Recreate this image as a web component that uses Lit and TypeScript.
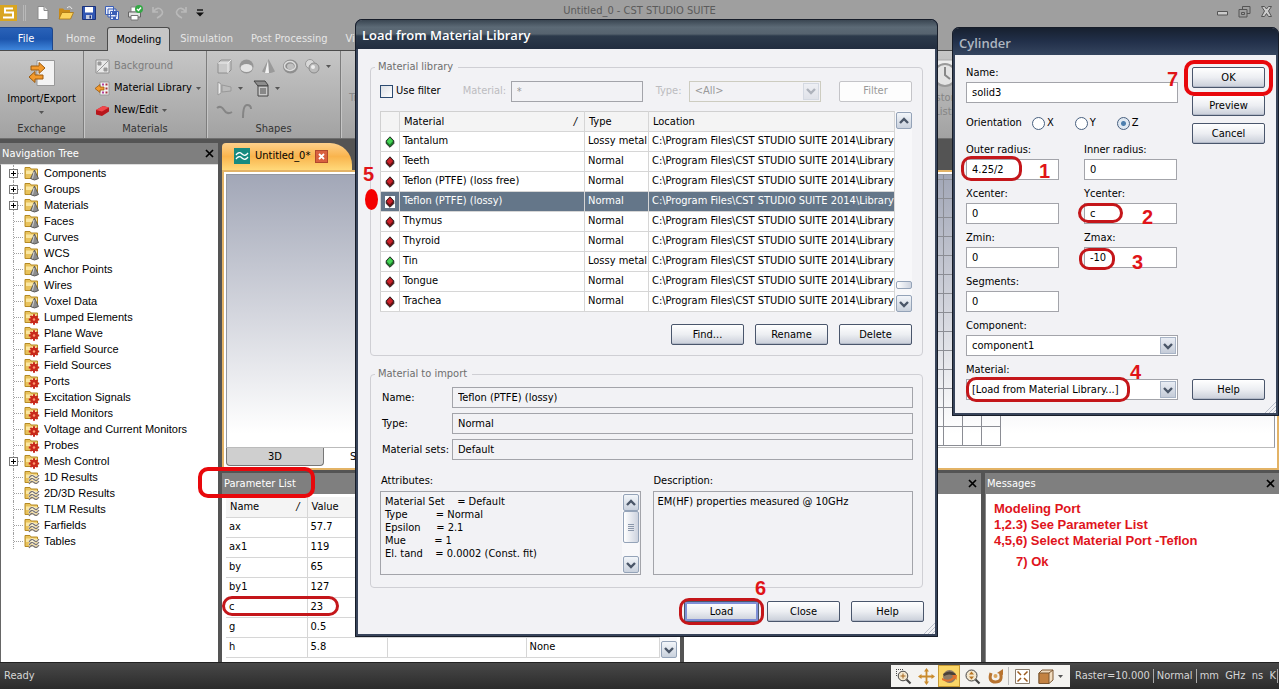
import { LitElement, html, svg, css, nothing } from "lit";
import { customElement, state } from "lit/decorators.js";
import { classMap } from "lit/directives/class-map.js";

type Node = { name: string; kind: "cone" | "gear" | "wave"; plus?: boolean };
type Mark = { x: number; y: number; w: number; h: number; kind?: string };

const TREE: Node[] = [
  { name: "Components", kind: "cone", plus: true },
  { name: "Groups", kind: "cone", plus: true },
  { name: "Materials", kind: "cone", plus: true },
  { name: "Faces", kind: "cone" },
  { name: "Curves", kind: "cone" },
  { name: "WCS", kind: "cone" },
  { name: "Anchor Points", kind: "cone" },
  { name: "Wires", kind: "cone" },
  { name: "Voxel Data", kind: "cone" },
  { name: "Lumped Elements", kind: "gear" },
  { name: "Plane Wave", kind: "gear" },
  { name: "Farfield Source", kind: "gear" },
  { name: "Field Sources", kind: "gear" },
  { name: "Ports", kind: "gear" },
  { name: "Excitation Signals", kind: "gear" },
  { name: "Field Monitors", kind: "gear" },
  { name: "Voltage and Current Monitors", kind: "gear" },
  { name: "Probes", kind: "gear" },
  { name: "Mesh Control", kind: "gear", plus: true },
  { name: "1D Results", kind: "wave" },
  { name: "2D/3D Results", kind: "wave" },
  { name: "TLM Results", kind: "wave" },
  { name: "Farfields", kind: "wave" },
  { name: "Tables", kind: "wave" },
];

const PARAMS = [
  ["ax", "57.7"],
  ["ax1", "119"],
  ["by", "65"],
  ["by1", "127"],
  ["c", "23"],
  ["g", "0.5"],
  ["h", "5.8"],
];

const MATERIALS = [
  ["Tantalum", "Lossy metal"],
  ["Teeth", "Normal"],
  ["Teflon (PTFE) (loss free)", "Normal"],
  ["Teflon (PTFE) (lossy)", "Normal"],
  ["Thymus", "Normal"],
  ["Thyroid", "Normal"],
  ["Tin", "Lossy metal"],
  ["Tongue", "Normal"],
  ["Trachea", "Normal"],
];

const LOCATION = "C:\\Program Files\\CST STUDIO SUITE 2014\\Library";

const ATTRS = `Material Set    = Default
Type         = Normal
Epsilon     = 2.1
Mue         = 1
El. tand    = 0.0002 (Const. fit)`;

const RINGS: Mark[] = [
  { x: 198, y: 467, w: 117, h: 31, kind: "bright" },
  { x: 222, y: 596, w: 117, h: 20 },
  { x: 961, y: 156, w: 61, h: 25 },
  { x: 1078, y: 203, w: 45, h: 20 },
  { x: 1079, y: 248, w: 36, h: 22 },
  { x: 966, y: 377, w: 164, h: 25 },
  { x: 1184, y: 60, w: 89, h: 36, kind: "bright" },
  { x: 679, y: 598, w: 85, h: 27 },
];

const DIGITS = [
  { t: "1", x: 1039, y: 160 },
  { t: "2", x: 1142, y: 206 },
  { t: "3", x: 1132, y: 251 },
  { t: "4", x: 1130, y: 361 },
  { t: "5", x: 363, y: 163 },
  { t: "6", x: 755, y: 577 },
  { t: "7", x: 1167, y: 68 },
];

const chevron = (dir: "up" | "down") => html`<svg class="chev" viewBox="0 0 10 8" width="10" height="8">
  <path d=${dir === "up" ? "M1 6 5 2 9 6" : "M1 2 5 6 9 2"} fill="none" stroke="#4a5668" stroke-width="2.4" />
</svg>`;

const caret = html`<svg class="caret" viewBox="0 0 5 3" width="5" height="3"><path d="M0 0H5L2.5 3z" fill="#555" /></svg>`;

const closeX = html`<svg viewBox="0 0 9 9" width="9" height="9"><path d="M1 1 8 8M8 1 1 8" stroke="#000" stroke-width="1.7" /></svg>`;

const folderIcon = (kind: string) => html`<svg viewBox="0 0 16 15" width="16" height="15">
  <path d="M1 1.500H6L7 3H13.500V12.500H1z" fill="#e9c35c" stroke="#b58a24" />
  <path d="M2 4.500H13V8H2z" fill="#fae7a2" />
  ${kind === "cone"
    ? svg`<path d="M10.500 4 14.500 12.500Q10.500 15.500 6.500 12.500z" fill="#8c8c8c" stroke="#4c4c4c" stroke-width=".8"/><path d="M10 6 8.500 12.500" stroke="#d5d5d5"/>`
    : kind === "gear"
      ? svg`<circle cx="10" cy="9.500" r="3.700" fill="#c8281c"/><g stroke="#c8281c" stroke-width="2"><path d="M10 4.300V14.700M4.800 9.500H15.200M6.400 5.900 13.600 13.100M13.600 5.900 6.400 13.100"/></g><circle cx="10" cy="9.500" r="1.200" fill="#ff9a70"/>`
      : svg`<g fill="none" stroke="#fff" stroke-width="2"><path d="M5 8Q7.500 4 10 6.500T15 5M5 11Q7.500 7 10 9.500T15 8M5 14Q7.500 10 10 12.500T15 11"/></g><g fill="none" stroke="#76706c" stroke-width="1.100"><path d="M5 8Q7.500 4 10 6.500T15 5M5 11Q7.500 7 10 9.500T15 8M5 14Q7.500 10 10 12.500T15 11"/></g>`}
</svg>`;

const gem = (green: boolean) => html`<svg viewBox="0 0 10 12" width="10" height="12">
  <path d="M5 .8 8.800 4.800V7.500L5 11.300 1.200 7.500V4.800z" fill=${green ? "#1c7a2a" : "#6d0f12"} stroke="#1d1d1d" stroke-width=".9" />
  <path d="M4.800 1.600 8 5 4.800 8.600 1.700 5.500z" fill=${green ? "#45d455" : "#c9222a"} />
</svg>`;

@customElement("app-root")
export class AppRoot extends LitElement {
  @state() private selected = 3;
  @state() private axis = "Z";

  static styles = css`
    :host {
      display: block;
      position: relative;
      height: 100vh;
      overflow: hidden;
      font: 11px/14px "DejaVu Sans Condensed", "DejaVu Sans", sans-serif;
      color: #000;
    }
    * { box-sizing: border-box; }
    button, input, select, textarea { font: inherit; color: inherit; margin: 0; border-radius: 0; }
    svg { display: block; flex: none; }
    .app { display: flex; flex-direction: column; height: 100%; background: #545454; }

    /* title bar and ribbon */
    .top { background: #9f9f9f; }
    .titlebar { display: grid; grid-template-columns: 1fr auto 1fr; align-items: center; height: 26px; }
    .quick { display: flex; align-items: center; gap: 7px; }
    .quick .sep { width: 3px; height: 16px; border: solid #b9b9b9; border-width: 0 1px; margin: 0 2px 0 -2px; }
    .apptitle { color: #5b5b5b; font-size: 11px; padding-bottom: 4px; }
    .winbtns { display: flex; justify-content: flex-end; gap: 9px; padding: 0 6px 4px 0; }
    .tabs { display: flex; align-items: flex-end; height: 25px; border-bottom: 1px solid #4b4b4b; color: #e6e6e6; }
    .tab { background: none; border: 0; padding: 0; height: 23px; margin-right: 18px; white-space: nowrap; }
    .tab.file { width: 53px; margin-right: 13px; background: linear-gradient(#2a62b8, #1c55ad 50%, #3f86dc); border: 1px solid #1d468c; border-width: 1px 1px 0 0; border-radius: 0 3px 0 0; color: #fff; }
    .tab.on { width: 63px; height: 24px; margin: 0 10px -1px -6px; color: #000; background: #c6c6c6; border: 1px solid #4b4b4b; border-bottom: 0; border-radius: 3px 3px 0 0; }
    .ribbon { display: flex; height: 88px; background: linear-gradient(#c6c6c6, #b6b6b6 45%, #a2a2a2); border-bottom: 1px solid #6f6f6f; }
    .group { display: flex; flex-direction: column; flex: none; border-right: 1px solid #7d7d7d; box-shadow: 1px 0 #c6c6c6; }
    .group .body { flex: 1; }
    .group h2 { margin: 0; font: inherit; text-align: center; height: 16px; color: #333; }
    .g1 { width: 84px; } .g2 { width: 123px; } .g3 { width: 134px; }
    .g4 { width: 572px; } .g5 { flex: 1; }
    .big { display: flex; flex-direction: column; align-items: center; gap: 5px; width: 100%; border: 0; background: none; padding: 8px 0 0; white-space: nowrap; }
    .list { display: flex; flex-direction: column; padding: 4px 0 0 11px; }
    .cmd { display: flex; align-items: center; gap: 4px; height: 22px; padding: 0; border: 0; background: none; white-space: nowrap; }
    .cmd.off, .off { color: #7c7c7c; }
    .shapes { display: grid; grid-template-rows: repeat(3, 22px); align-content: start; padding: 4px 0 0 9px; }
    .shapes div { display: flex; gap: 5px; align-items: center; }
    .g4 .body { padding: 40px 0 0 8px; color: #8b8b8b; }
    .g5 .body { padding: 6px 0 0 8px; color: #858585; line-height: 14px; text-align: center; width: 52px; }

    /* work area */
    .work { flex: 1; display: flex; gap: 4px; padding-top: 4px; min-height: 0; }
    .panel { display: flex; flex-direction: column; background: #fff; min-width: 0; min-height: 0; }
    .phead { display: flex; align-items: center; justify-content: space-between; height: 21px; flex: none; background: #7f7f7f; color: #fff; padding: 0 4px 0 2px; }
    .phead button, .tabclose { border: 0; background: none; padding: 0; }
    .nav { width: 218px; flex: none; }
    .tree { list-style: none; margin: 0; padding: 0 0 0 12px; flex: 1; border-top: 1px solid #ddd; border-left: 1px solid #666; }
    .tree li { position: relative; display: flex; align-items: center; gap: 4px; height: 16px; padding-left: 10px; font-family: "Liberation Sans", sans-serif; white-space: nowrap; border-left: 1px dotted #a0a0a0; }
    .tree li::before { content: ""; position: absolute; left: 0; top: 8px; width: 9px; border-top: 1px dotted #a0a0a0; }
    .plus { position: absolute; left: -5px; top: 4px; width: 9px; height: 9px; padding: 0; border: 1px solid #777; background: #fff; }
    .plus svg { width: 7px; height: 7px; }
    .right { flex: 1; display: flex; flex-direction: column; min-width: 0; }
    .doc { flex: 1; display: flex; flex-direction: column; min-height: 0; }
    .doctab { display: flex; align-items: center; gap: 5px; align-self: flex-start; width: 130px; height: 27px; padding: 0 0 1px 12px; background: linear-gradient(#fdd08b, #f9b44d 50%, #ffd97a); border-radius: 4px 22px 0 0; }
    .tabclose { width: 13px; height: 13px; background: #d9603f; border: 1px solid #b0482d; }
    .frame { flex: 1; display: flex; flex-direction: column; border: 2px solid #e3b366; background: #fff; padding: 2px; min-height: 0; }
    .canvas { flex: 1; background: linear-gradient(#a2a7b7, #d3d5dd 50%, #fff 95%); border: 1px solid #9498a2; border-bottom-color: #bbb; min-height: 0; }
    .grid { width: 213px; height: 271px; margin-left: 561px; background: repeating-linear-gradient(0deg, #8b8d94 0 1px, #0000 1px 19px), repeating-linear-gradient(-90deg, #8b8d94 0 1px, #0000 1px 19px); }
    .views { display: flex; height: 18px; }
    .views button { padding: 0 26px; border: 0; background: none; }
    .views .on { width: 98px; background: #cfcfcf; border: 1px solid #777; border-top: 0; border-radius: 0 0 4px 4px; }
    .bottom { display: flex; gap: 4px; height: 192px; padding-top: 3px; flex: none; }
    .params { width: 458px; flex: none; }
    .progress { flex: 1; }
    .messages { width: 294px; flex: none; }
    .ptable { display: flex; flex: 1; padding: 3px 3px 4px 4px; }
    table { border-collapse: collapse; table-layout: fixed; width: 100%; }
    th, td { font-weight: normal; text-align: left; height: 20px; padding: 0 0 1px 3px; border: 1px solid #d6d6d6; border-width: 0 1px 1px 0; white-space: nowrap; overflow: hidden; }
    th { background: #f4f4f4; padding: 1px 0 0 4px; }
    .sort { float: right; padding-right: 7px; font-style: italic; }
    .note { padding: 7px 8px; color: #e0141c; font: bold 13px/16px "Liberation Sans", sans-serif; border-left: 1px solid #888; flex: 1; white-space: nowrap; }
    .note p { margin: 0; }
    .note .last { padding: 5px 0 0 22px; }

    /* status bar */
    .status { display: flex; align-items: center; height: 27px; flex: none; background: linear-gradient(#484848, #2b2b2b); border-top: 1px solid #222; color: #d6d6d6; padding: 0 1px 0 4px; }
    .status .tools { display: flex; align-items: center; gap: 3px; margin-left: auto; height: 22px; width: 179px; background: #f4f3f0; padding: 0 2px; margin-right: 5px; }
    .tool { border: 0; padding: 0; background: none; width: 20px; height: 20px; display: grid; place-items: center; }
    .tool.on { background: #fbd666; outline: 1px solid #c79a35; }
    .tools .bar { width: 1px; height: 18px; background: #bbb; }
    .status .cell { border-left: 1px solid #aaa; padding-left: 3px; margin-left: 3px; white-space: pre; }
    .status .end { border-right: 1px solid #aaa; padding-right: 1px; }

    /* dialogs */
    .dialog { position: absolute; display: flex; flex-direction: column; background: #f2f2f5; border: 3px solid #38445a; outline: 1px solid #171d29; outline-offset: -1px; border-top-width: 1px; border-radius: 7px 7px 0 0; }
    .dialog > header { color: #fff; font: 600 13px/30px "Open Sans", sans-serif; height: 29px; flex: none; margin: 0 -2px; padding-left: 6px; background: linear-gradient(#3a4652, #5c6a76 25%, #56636f 48%, #2c3a4b 55%, #222d3f); border-radius: 6px 6px 0 0; }
    .lib { left: 355px; top: 19px; width: 583px; }
    .cyl { left: 952px; top: 27px; width: 327px; }
    .cyl > header { color: #aeb6c0; height: 27px; background: linear-gradient(#17202f, #22304a 50%, #35455e); }
    .dbody { padding: 11px 12px 12px 12px; }
    fieldset { min-width: 0; margin: 0; padding: 6px 10px 10px 9px; border: 1px solid #cfcfd4; border-radius: 4px; }
    legend { padding: 0 5px 0 3px; margin-left: -5px; color: #6e6e6e; }
    .filter { display: flex; align-items: center; height: 22px; margin-bottom: 9px; }
    .filter label { flex: none; }
    .check { appearance: none; width: 13px; height: 13px; border: 1px solid #2c4a70; background: linear-gradient(135deg, #dcdfe4, #fff); margin-right: 3px; flex: none; }
    .lab { color: #bcbcc0; }
    .lab.m { margin-left: 22px; width: 48px; } .lab.t { margin-left: 13px; width: 33px; }
    .txt { border: 1px solid #a3a4aa; background: #fff; height: 21px; padding: 0 5px; min-width: 0; width: 100%; }
    .txt:disabled, .txt[readonly] { background: #f2f2f5; }
    .filter .txt { width: 132px; color: #999; }
    .combo { display: flex; border: 1px solid #a3a4aa; background: #fff; height: 21px; padding: 1px; }
    .combo select { appearance: none; flex: 1; min-width: 0; border: 0; background: none; padding: 0 4px; opacity: 1; }
    .arrow { width: 16px; display: grid; place-items: center; border: 1px solid #a8b4c6; background: linear-gradient(#e9edf4, #c5ccd8); }
    .filter .combo { width: 132px; border-color: #cdccc0; background: #f2f2f5; color: #999; }
    .filter .arrow { opacity: .4; }
    .btn { width: 73px; height: 21px; flex: none; padding: 0; border: 1px solid #4a566c; border-radius: 2px; background: linear-gradient(#fff, #eceef2 50%, #c9ced9); box-shadow: inset 0 -1px #b3bac8; }
    .btn:disabled { color: #999; background: #fdfdfd; border-color: #c4c4c8; box-shadow: none; margin-left: auto; }
    .btn.def { box-shadow: inset 0 0 0 2px #7e8fd6; width: 75px; margin-right: -3px; }
    .row { display: flex; gap: 11px; justify-content: flex-end; }
    .foot { margin-right: -1px; }
    .tbl { display: flex; margin-bottom: 12px; background: #fff; }
    .tbl table { flex: 1; border: 1px solid #d0d0d0; border-bottom: 0; }
    .tbl td { padding-bottom: 2px; }
    .tbl td:first-child { padding: 0 0 0 4px; }
    .sel td { background: #647689; color: #fff; }
    .sel td:first-child svg { background: #fff; }
    .scroll { width: 17px; flex: none; display: flex; flex-direction: column; padding: 1px 0 0 1px; background: #f8f8fa; }
    .sb { width: 16px; height: 17px; padding: 0; border: 1px solid #94a3b8; border-radius: 2px; display: grid; place-items: center; background: linear-gradient(#f3f6fa, #c9d1dd); flex: none; }
    .thumb { flex: none; border: 1px solid #94a3b8; border-radius: 2px; background: linear-gradient(90deg, #fff, #cdd3df); display: grid; place-content: center; gap: 1px; }
    .thumb i { width: 6px; height: 1px; background: #8a97ab; }
    .imp { margin-top: 11px; margin-bottom: 13px; padding-bottom: 12px; }
    .pairs { display: grid; grid-template-columns: 71px 1fr; row-gap: 5px; align-items: center; padding: 0 0 14px 2px; margin-right: -1px; }
    .pairs .txt { margin-left: -1px; width: calc(100% + 1px); }
    .cols { display: grid; grid-template-columns: 1fr 1fr; column-gap: 12px; margin-right: -1px; }
    .cols > div > label { display: block; height: 17px; padding-left: 1px; }
    .area { display: flex; height: 84px; border: 1px solid #a3a4aa; padding: 1px 1px 1px 0; }
    .area textarea { flex: 1; min-width: 0; resize: none; border: 0; outline: 0; background: none; padding: 2px 4px; line-height: 13px; white-space: pre; overflow: hidden; }
    .grip { position: absolute; right: 0; bottom: 0; }

    .cbody { display: grid; grid-template-columns: 212px 73px; column-gap: 14px; padding: 11px 0 13px 11px; }
    .fields { display: grid; grid-template-columns: 93px 93px; column-gap: 25px; row-gap: 7px; }
    .wide { grid-column: 1 / -1; width: 212px; }
    .fld label { display: block; height: 16px; }
    .orient { display: flex; align-items: center; height: 26px; }
    .orient label { display: flex; align-items: center; gap: 2px; }
    .orient .o1 { margin-left: 10px; } .orient .o2, .orient .o3 { margin-left: 21px; }
    .radio { appearance: none; width: 13px; height: 13px; border: 1px solid #48607f; border-radius: 50%; background: #fff; }
    .radio:checked { background: radial-gradient(#4d7fae 0 2px, #dfe8f2 3px); }
    .acts { display: flex; flex-direction: column; gap: 7px; padding-top: 1px; }
    .acts .last { margin-top: auto; }

    /* call-outs laid over the windows */
    .ring { position: absolute; border: 3px solid #c4161a; border-radius: 10px; pointer-events: none; }
    .ring.bright { border: 4px solid #e8080c; }
    .digit { position: absolute; color: #e01418; font: bold 20px/22px "Liberation Sans", sans-serif; }
    .dot { position: absolute; left: 365px; top: 189px; width: 13px; height: 21px; border-radius: 50%; background: #f40000; }
  `;

  private quick() {
    return html`<div class="quick">
      <svg width="18" height="18" viewBox="0 0 18 18"><path d="M0 1H17V17H0z" fill="#d9a520" /><path d="M13 4.500H5V8.500H13V13.500H3" fill="none" stroke="#fff" stroke-width="2" /></svg>
      <span class="sep"></span>
      <svg width="16" height="16" viewBox="0 0 16 16"><path d="M3 1.500H9L13 5.500V14.500H3z" fill="#fff" stroke="#8a8a8a" /><path d="M9 1.500V5.500H13" fill="#ddd" stroke="#8a8a8a" /></svg>
      <svg width="16" height="16" viewBox="0 0 16 16"><path d="M1 14V3.500H5L6.500 5H12V14z" fill="#c98a16" /><path d="M1 14 4 7.500H15.500L12.500 14z" fill="#fcd35c" stroke="#a87312" stroke-width=".8" /><path d="M9 3Q12 0 14 4" stroke="#eee" fill="none" /></svg>
      <svg width="16" height="16" viewBox="0 0 16 16"><path d="M1.500 1.500H14.500V14.500H1.500z" fill="#3157b4" stroke="#1b327a" /><path d="M4 2H12V7.500H4z" fill="#fff" /><path d="M5 10H11V14H5z" fill="#c6cde0" /><path d="M8.500 10.500H10V13.500H8.500z" fill="#1b327a" /></svg>
      <svg width="16" height="16" viewBox="0 0 16 16"><g fill="#e9eefc" stroke="#3b5fb6"><path d="M1.500 1.500H9.500V9.500H1.500zM4 4H12V12H4zM6.500 6.500H14.500V14.500H6.500z" /></g><path d="M8 7H13V10H8z" fill="#3b5fb6" /><path d="M9 12H12V14H9z" fill="#3b5fb6" /></svg>
      <svg width="16" height="16" viewBox="0 0 16 16"><path d="M4 2H11V7H4z" fill="#fff" stroke="#888" /><path d="M1.500 7H13.500V12H1.500z" fill="#e3e3e3" stroke="#666" /><path d="M4 10.500H11V15H4z" fill="#fff" stroke="#777" /><circle cx="12" cy="4" r="4" fill="#34a845" /><path d="M10 4 11.500 5.500 14 2.500" stroke="#fff" fill="none" stroke-width="1.400" /></svg>
      <svg width="16" height="16" viewBox="0 0 16 16"><path d="M3 2V7H8M3.500 6.500Q8 1 11.500 5T7 13" fill="none" stroke="#b9b9b9" stroke-width="1.600" /></svg>
      <svg width="16" height="16" viewBox="0 0 16 16"><path d="M13 2V7H8M12.500 6.500Q8 1 4.500 5T9 13" fill="none" stroke="#b9b9b9" stroke-width="1.600" /></svg>
      <svg width="8" height="8" viewBox="0 0 8 8"><path d="M1 1H7" stroke="#111" stroke-width="1.400" /><path d="M0 3.500H8L4 7.500z" fill="#111" /></svg>
    </div>`;
  }

  private ribbon() {
    const g = (p: unknown, w = 17) => html`<svg width=${w} height="17" viewBox="0 0 17 17">${p}</svg>`;
    return html`
      <nav class="tabs">
        <button class="tab file">File</button><button class="tab">Home</button>
        <button class="tab on">Modeling</button><button class="tab">Simulation</button>
        <button class="tab">Post Processing</button><button class="tab">View</button>
      </nav>
      <div class="ribbon">
        <section class="group g1">
          <div class="body">
            <button class="big">
              <svg width="28" height="28" viewBox="0 0 28 28"><path d="M9 1.500H26.500V26.500H9z" fill="#f3f3f3" stroke="#999" /><path d="M3 7H11V3.500L17 9 11 14.500V11H3zM15 16H7V12.500L1 18 7 23.500V20H15z" fill="#f39a2c" stroke="#9c5b10" /></svg>
              <span>Import/Export</span>${caret}
            </button>
          </div>
          <h2>Exchange</h2>
        </section>
        <section class="group g2">
          <div class="body list">
            <button class="cmd off">
              <svg width="15" height="15" viewBox="0 0 15 15"><path d="M1 1H14V14H1z" fill="#e9e9e9" stroke="#8f8f8f" /><path d="M2 13 13 2M3 3H6V6H3zM9 9H12V12H9z" fill="#999" stroke="#999" /></svg>Background
            </button>
            <button class="cmd">
              <svg width="15" height="15" viewBox="0 0 15 15"><path d="M5 1H14V14H5z" fill="#f4f4f4" stroke="#999" /><path d="M7 2.500H9V4.500H7zM7 10.500H9V12.500H7z" fill="#b23ea0" /><path d="M10.500 2.500H12.500V4.500H10.500zM10.500 6.500H12.500V8.500H10.500zM10.500 10.500H12.500V12.500H10.500z" fill="#a8323a" /><path d="M9 6H5V3.500L0 7.500 5 11.500V9H9z" fill="#f39a2c" stroke="#9c5b10" stroke-width=".8" /></svg>Material Library ${caret}
            </button>
            <button class="cmd">
              <svg width="15" height="15" viewBox="0 0 15 15"><path d="M1 7 8 3 14 4.500V8.500L7 13 1 11.500z" fill="#b8151b" /><path d="M1 7 8 3 14 4.500 7 8.500z" fill="#f0484c" /></svg>New/Edit ${caret}
            </button>
          </div>
          <h2>Materials</h2>
        </section>
        <section class="group g3">
          <div class="body shapes">
            <div>
              ${g(svg`<path d="M2 5 5 2H15V12L12 15H2z" fill="#c9c9c9" stroke="#8e8e8e"/><path d="M2 5H12V15M12 5 15 2" fill="none" stroke="#eee"/>`)}
              ${g(svg`<circle cx="8.500" cy="8.500" r="7" fill="#969696"/><ellipse cx="8.500" cy="10" rx="6" ry="4" fill="#e4e4e4"/>`)}
              ${g(svg`<path d="M8.500 1 15 13.500Q8.500 17 2 13.500z" fill="#9a9a9a"/><path d="M8 2 9 15H5z" fill="#f2f2f2"/>`)}
              ${g(svg`<ellipse cx="8.500" cy="8.500" rx="5.500" ry="5" fill="none" stroke="#8f8f8f" stroke-width="4"/><ellipse cx="8" cy="8" rx="5.500" ry="4.500" fill="none" stroke="#ddd" stroke-width="1.500"/>`)}
              ${g(svg`<circle cx="6" cy="6" r="4.500" fill="#d8d8d8" stroke="#999"/><circle cx="10" cy="10" r="5" fill="#bbb" stroke="#8a8a8a"/><circle cx="9" cy="9" r="2" fill="#eee"/>`)}
              ${caret}
            </div>
            <div>
              ${g(svg`<path d="M2 2V15L5 13V4z" fill="#eee" stroke="#999"/><path d="M6 5 15 7V11L6 12z" fill="#bbb" stroke="#999"/>`)} ${caret}
              <span></span>
              ${g(svg`<path d="M1 1H12L15 5V6H5z" fill="#8d8d8d" stroke="#444"/><path d="M5 6H15V16H5z" fill="#c9c9c9" stroke="#444"/><path d="M7 8H13V14H7z" fill="#888"/>`)} ${caret}
            </div>
            <div>
              ${g(svg`<path d="M1 6Q5 3 8 8T16 10" fill="none" stroke="#858585" stroke-width="2"/>`)}
              ${g(svg`<path d="M5 16Q5 3 9 3T13 7" fill="none" stroke="#858585" stroke-width="2"/>`)}
            </div>
          </div>
          <h2>Shapes</h2>
        </section>
        <section class="group g4"><div class="body">Transform</div></section>
        <section class="group g5"><div class="body">
          <svg width="38" height="34" viewBox="0 0 38 34"><path d="M6 3H32V28H6z" fill="#eee" stroke="#aaa" /><circle cx="24" cy="18" r="11" fill="#e4e4e4" stroke="#999" stroke-width="2" /><path d="M24 10V18L29 22" fill="none" stroke="#888" stroke-width="2" /></svg>
          History<br />List
        </div></section>
      </div>`;
  }

  private nav() {
    return html`<aside class="panel nav">
      <div class="phead"><span>Navigation Tree</span><button aria-label="Close">${closeX}</button></div>
      <ul class="tree">
        ${TREE.map(
          (n) => html`<li>
            ${n.plus
              ? html`<button class="plus" aria-label="Expand"><svg viewBox="0 0 7 7"><path d="M1 3.500H6M3.500 1V6" stroke="#000" /></svg></button>`
              : nothing}
            ${folderIcon(n.kind)}<span>${n.name}</span>
          </li>`
        )}
      </ul>
    </aside>`;
  }

  private bottom() {
    return html`<div class="bottom">
      <section class="panel params">
        <div class="phead"><span>Parameter List</span></div>
        <div class="ptable">
          <table>
            <colgroup><col style="width:81px" /><col style="width:80px" /><col style="width:139px" /><col /></colgroup>
            <thead><tr><th>Name<span class="sort">/</span></th><th>Value</th><th></th><th></th></tr></thead>
            <tbody>
              ${PARAMS.map((p, i) => html`<tr><td>${p[0]}</td><td>${p[1]}</td><td></td><td>${i === PARAMS.length - 1 ? "None" : nothing}</td></tr>`)}
            </tbody>
          </table>
          <div class="scroll"><button class="sb" aria-label="Up">${chevron("up")}</button><span style="flex:1"></span><button class="sb" aria-label="Down">${chevron("down")}</button></div>
        </div>
      </section>
      <section class="panel progress">
        <div class="phead"><span></span><button aria-label="Close">${closeX}</button></div>
      </section>
      <section class="panel messages">
        <div class="phead"><span>Messages</span><button aria-label="Close">${closeX}</button></div>
        <div class="note">
          <p>Modeling Port</p>
          <p>1,2.3) See Parameter List</p>
          <p>4,5,6) Select Material Port -Teflon</p>
          <p class="last">7) Ok</p>
        </div>
      </section>
    </div>`;
  }

  private status() {
    const t = (p: unknown, on = false) =>
      html`<button class=${classMap({ tool: true, on })}><svg width="17" height="17" viewBox="0 0 17 17">${p}</svg></button>`;
    return html`<footer class="status">
      <span>Ready</span>
      <div class="tools">
        ${t(svg`<path d="M1 1.500H9M1.500 1V9" stroke="#444" stroke-dasharray="1 1"/><circle cx="8" cy="8" r="4.800" fill="#f3e6cc" stroke="#444"/><path d="M5.500 8H10.500M8 5.500V10.500" stroke="#a3641c"/><path d="M11.500 11.500 15.500 15.500" stroke="#444" stroke-width="2.200"/>`)}
        ${t(svg`<path d="M8.500 2V15M2 8.500H15" stroke="#c98a2b" stroke-width="1.800"/><path d="M8.500 0 11 3.500H6zM8.500 17 6 13.500H11zM0 8.500 3.500 6V11zM17 8.500 13.500 11V6z" fill="#c98a2b"/>`)}
        ${t(svg`<circle cx="8.500" cy="8.500" r="6.500" fill="#8c7a68"/><path d="M2 6Q8.500 1 15 6L14 8Q8 5 3 8z" fill="#4a4038"/><path d="M1 10Q8 14 12 9L11 7 16 7 15.500 12 14 10.500Q8 16 1 12z" fill="#e0702c"/>`, true)}
        ${t(svg`<circle cx="7.500" cy="7.500" r="5.500" fill="#f3e6cc" stroke="#444"/><path d="M7.500 3.500 10 6.500H5zM7.500 11.500 5 8.500H10z" fill="#b87420"/><path d="M11.500 11.500 15.500 15.500" stroke="#444" stroke-width="2.200"/>`)}
        ${t(svg`<path d="M4 5Q1 14 8.500 14T13.500 5" fill="none" stroke="#b87430" stroke-width="3"/><path d="M16 1V7L10 5z" fill="#b87430"/><circle cx="8.500" cy="8" r="2" fill="#d9a45c"/>`)}
        <span class="bar"></span>
        ${t(svg`<path d="M1.500 1.500H15.500V15.500H1.500z" fill="#fff" stroke="#8a7c6c"/><path d="M3.500 3.500 7 7M13.500 3.500 10 7M3.500 13.500 7 10M13.500 13.500 10 10" stroke="#9c5a1c" stroke-width="1.500"/>`)}
        ${t(svg`<path d="M2 5 5 2H16V12L12 15.500H2z" fill="#f2ddc0" stroke="#7c5630"/><path d="M2 5H12V15.500H2z" fill="#c38242" stroke="#7c5630"/><path d="M12 5 16 2" stroke="#7c5630"/>`)}
        ${caret}
      </div>
      <span>Raster=10.000</span><span class="cell">Normal</span><span class="cell end">mm  GHz  ns  K</span>
    </footer>`;
  }

  private library() {
    return html`<section class="dialog lib" role="dialog" aria-label="Load from Material Library">
      <header>Load from Material Library</header>
      <div class="dbody">
        <fieldset>
          <legend>Material library</legend>
          <div class="filter">
            <input class="check" type="checkbox" id="uf" /><label for="uf">Use filter</label>
            <label class="lab m" for="fm">Material:</label><input class="txt" id="fm" value="*" disabled />
            <label class="lab t" for="ft">Type:</label>
            <div class="combo"><select id="ft" disabled><option>&lt;All&gt;</option></select><span class="arrow">${chevron("down")}</span></div>
            <button class="btn" disabled>Filter</button>
          </div>
          <div class="tbl">
            <table>
              <colgroup><col style="width:19px" /><col style="width:185px" /><col style="width:64px" /><col /></colgroup>
              <thead><tr><th></th><th>Material<span class="sort">/</span></th><th>Type</th><th>Location</th></tr></thead>
              <tbody>
                ${MATERIALS.map(
                  (m, i) => html`<tr class=${classMap({ sel: i === this.selected })} @click=${() => (this.selected = i)}>
                    <td>${gem(m[1] !== "Normal")}</td><td>${m[0]}</td><td>${m[1]}</td><td>${LOCATION}</td>
                  </tr>`
                )}
              </tbody>
            </table>
            <div class="scroll">
              <button class="sb" aria-label="Up">${chevron("up")}</button><span style="flex:1"></span>
              <span class="thumb" style="height:8px;margin-bottom:6px"></span>
              <button class="sb" aria-label="Down">${chevron("down")}</button>
            </div>
          </div>
          <div class="row"><button class="btn">Find...</button><button class="btn">Rename</button><button class="btn">Delete</button></div>
        </fieldset>
        <fieldset class="imp">
          <legend>Material to import</legend>
          <div class="pairs">
            <label for="in">Name:</label><input class="txt" id="in" readonly value="Teflon (PTFE) (lossy)" />
            <label for="it">Type:</label><input class="txt" id="it" readonly value="Normal" />
            <label for="is">Material sets:</label><input class="txt" id="is" readonly value="Default" />
          </div>
          <div class="cols">
            <div>
              <label for="at">Attributes:</label>
              <div class="area">
                <textarea id="at" readonly .value=${ATTRS}></textarea>
                <div class="scroll">
                  <button class="sb" aria-label="Up">${chevron("up")}</button>
                  <span class="thumb" style="height:32px"><i></i><i></i><i></i><i></i></span><span style="flex:1"></span>
                  <button class="sb" aria-label="Down">${chevron("down")}</button>
                </div>
              </div>
            </div>
            <div>
              <label for="de">Description:</label>
              <div class="area"><textarea id="de" readonly .value=${"EM(HF) properties measured @ 10GHz"}></textarea></div>
            </div>
          </div>
        </fieldset>
        <div class="row foot"><button class="btn def">Load</button><button class="btn">Close</button><button class="btn">Help</button></div>
      </div>
      ${this.grip()}
    </section>`;
  }

  private grip() {
    return html`<svg class="grip" width="12" height="12" viewBox="0 0 12 12"><path d="M1 12 12 1M5 12 12 5M9 12 12 9" stroke="#b9bfca" /></svg>`;
  }

  private field(id: string, label: string, value: string, cls = "") {
    return html`<div class="fld ${cls}"><label for=${id}>${label}</label><input class="txt" id=${id} .value=${value} /></div>`;
  }

  private cylinder() {
    return html`<section class="dialog cyl" role="dialog" aria-label="Cylinder">
      <header>Cylinder</header>
      <div class="cbody">
        <div class="fields">
          ${this.field("nm", "Name:", "solid3", "wide")}
          <div class="wide orient">
            <span>Orientation</span>
            ${["X", "Y", "Z"].map(
              (a, i) => html`<label class="o${i + 1}"><input class="radio" type="radio" name="axis" .checked=${this.axis === a} @change=${() => (this.axis = a)} />${a}</label>`
            )}
          </div>
          ${this.field("or", "Outer radius:", "4.25/2")} ${this.field("ir", "Inner radius:", "0")}
          ${this.field("xc", "Xcenter:", "0")} ${this.field("yc", "Ycenter:", "c")}
          ${this.field("z0", "Zmin:", "0")} ${this.field("z1", "Zmax:", "-10")}
          ${this.field("sg", "Segments:", "0", "")}
          <div class="fld wide">
            <label for="co">Component:</label>
            <div class="combo"><select id="co"><option>component1</option></select><span class="arrow">${chevron("down")}</span></div>
          </div>
          <div class="fld wide">
            <label for="ma">Material:</label>
            <div class="combo"><select id="ma"><option>[Load from Material Library...]</option></select><span class="arrow">${chevron("down")}</span></div>
          </div>
        </div>
        <div class="acts">
          <button class="btn">OK</button><button class="btn">Preview</button><button class="btn">Cancel</button><button class="btn last">Help</button>
        </div>
      </div>
      ${this.grip()}
    </section>`;
  }

  render() {
    return html`
      <div class="app">
        <div class="top">
          <div class="titlebar">
            ${this.quick()}
            <span class="apptitle">Untitled_0 - CST STUDIO SUITE</span>
            <div class="winbtns">
              <svg width="13" height="13" viewBox="0 0 13 13"><path d="M1.500 6.500H11.500V10H1.500z" fill="#ccc" stroke="#555" /></svg>
              <svg width="13" height="13" viewBox="0 0 13 13"><path d="M4.500 1.500H12V8.500H9M4.500 1.500V4.500M1 4.500H9V12H1zM3.500 7.500H6.500V9.500H3.500z" fill="none" stroke="#555" /></svg>
              <svg width="13" height="13" viewBox="0 0 13 13"><path d="M1.500 1.500H4.500L6.500 4 8.500 1.500H11.500L8.500 6 11.500 11.500H8.500L6.500 8.500 4.500 11.500H1.500L4.500 6z" fill="#ccc" stroke="#555" /></svg>
            </div>
          </div>
          ${this.ribbon()}
        </div>
        <div class="work">
          ${this.nav()}
          <main class="right">
            <div class="doc">
              <div class="doctab">
                <svg width="16" height="16" viewBox="0 0 16 16"><path d="M0 0H16V16H0z" fill="#168a80" /><path d="M2 7Q5 3 8 6T14 5M2 11Q5 7 8 10T14 9" fill="none" stroke="#fff" stroke-width="1.300" /></svg>
                <span>Untitled_0*</span>
                <button class="tabclose" aria-label="Close"><svg viewBox="0 0 11 11" width="11" height="11"><path d="M3 3 8 8M8 3 3 8" stroke="#fff" stroke-width="1.800" /></svg></button>
              </div>
              <div class="frame">
                <div class="canvas"><div class="grid"></div></div>
                <div class="views"><button class="on">3D</button><button>Schematic</button></div>
              </div>
            </div>
            ${this.bottom()}
          </main>
        </div>
        ${this.status()}
      </div>
      ${this.library()} ${this.cylinder()}
      ${RINGS.map((r) => html`<span class="ring ${r.kind ?? ""}" style="left:${r.x}px;top:${r.y}px;width:${r.w}px;height:${r.h}px"></span>`)}
      ${DIGITS.map((d) => html`<span class="digit" style="left:${d.x}px;top:${d.y}px">${d.t}</span>`)}
      <span class="dot"></span>
    `;
  }
}
